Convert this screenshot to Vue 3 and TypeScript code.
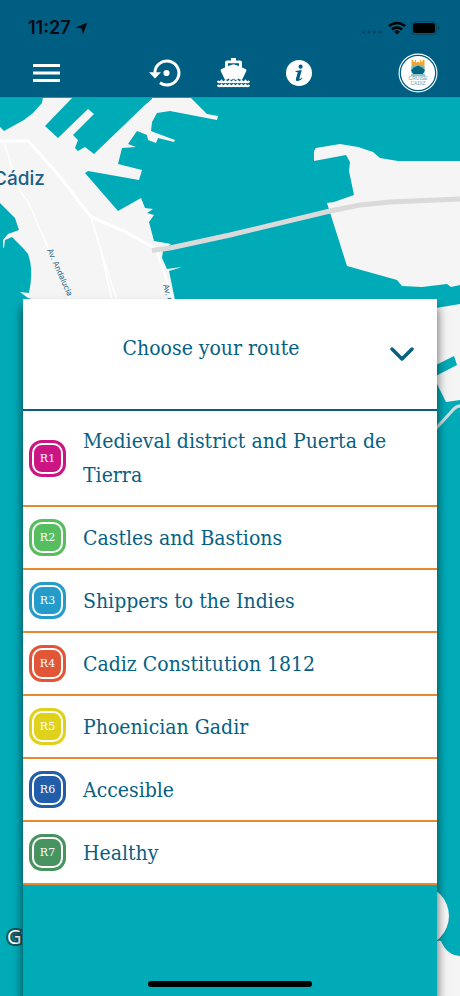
<script setup lang="ts">
import { ref } from 'vue'

interface Route {
  code: string
  name: string
  color: string
}

const open = ref(true)
const selected = ref<string | null>(null)

const routes: Route[] = [
  { code: 'R1', name: 'Medieval district and Puerta de Tierra', color: '#cb1583' },
  { code: 'R2', name: 'Castles and Bastions', color: '#56be5e' },
  { code: 'R3', name: 'Shippers to the Indies', color: '#239bcb' },
  { code: 'R4', name: 'Cadiz Constitution 1812', color: '#e15637' },
  { code: 'R5', name: 'Phoenician Gadir', color: '#dfd11c' },
  { code: 'R6', name: 'Accesible', color: '#215da8' },
  { code: 'R7', name: 'Healthy', color: '#479460' },
]
</script>

<template>
  <div class="screen">
    <header class="top">
      <div class="status">
        <div class="clock">
          <span>11:27</span>
          <svg width="13" height="13" viewBox="0 0 13 13" aria-hidden="true">
            <path d="M12.5.5 7.800 12.400 6.700 6.600.6 5.600z" fill="#020b12" />
          </svg>
        </div>
        <div class="signals">
          <svg width="22" height="6" viewBox="0 0 22 6" aria-hidden="true">
            <g fill="#064462">
              <circle cx="2.5" cy="3" r="1.6" />
              <circle cx="8" cy="3" r="1.6" />
              <circle cx="13.5" cy="3" r="1.6" />
              <circle cx="19" cy="3" r="1.6" />
            </g>
          </svg>
          <svg width="18" height="14" viewBox="0 0 18 14" aria-hidden="true">
            <g fill="none" stroke="#000" stroke-width="2.5">
              <path d="M1 5.2a11.4 11.4 0 0 1 16 0" />
              <path d="M4 8.5a7.1 7.1 0 0 1 10 0" />
            </g>
            <path d="M6.2 10.7a4 4 0 0 1 5.6 0L9 13.6z" />
          </svg>
          <svg width="29" height="14" viewBox="0 0 29 14" aria-hidden="true">
            <rect x=".5" y=".5" width="25" height="13" rx="4" fill="none" stroke="#064462" />
            <rect x="2" y="2" width="22" height="10" rx="2.5" />
            <path d="M27 4.7c2 .8 2 3.8 0 4.6z" fill="#064462" />
          </svg>
        </div>
      </div>
      <nav class="toolbar" aria-label="Main">
        <button type="button" class="tool menu" aria-label="Menu">
          <svg width="27" height="18" viewBox="0 0 27 18">
            <path d="M0 1.5h27M0 9h27M0 16.5h27" stroke="#fff" stroke-width="3" />
          </svg>
        </button>
        <div class="tools">
          <button type="button" class="tool" aria-label="History">
            <svg width="32" height="28" viewBox="0 0 32 28">
              <path d="M5.900 14A12 12 0 1 1 11 23.800" fill="none" stroke="#fff" stroke-width="3" />
              <path d="M0 13.200h12L6 19.600z" fill="#fff" />
              <circle cx="17.500" cy="14" r="3.100" fill="#fff" />
            </svg>
          </button>
          <button type="button" class="tool" aria-label="Cruise ships">
            <svg width="33" height="30" viewBox="0 0 33 30">
              <path
                fill-rule="evenodd"
                d="M14 0h5v2.500h4q2 0 2 2v5l3.500 1.500q1.300.6.8 2l-4.100 8.500q-1.700.8-3.700-1-2.500 2.800-5 0-2.500 2.800-5 0-2 1.800-3.700 1L3.700 13q-.5-1.400.8-2L8 9.500v-5q0-2 2-2h4zM11 5.300v2.800l5.500-1.800 5.500 1.800V5.300z"
                fill="#fff"
              />
              <path
                d="M.5 23q2 2.500 4 0 2 2.500 4 0 2 2.500 4 0 2 2.500 4 0 2 2.500 4 0 2 2.500 4 0 2 2.500 4 0 2 2.500 4 0M.5 27q2 2.500 4 0 2 2.500 4 0 2 2.500 4 0 2 2.500 4 0 2 2.500 4 0 2 2.500 4 0 2 2.500 4 0 2 2.500 4 0"
                fill="none"
                stroke="#fff"
                stroke-width="2.200"
              />
            </svg>
          </button>
          <button type="button" class="tool" aria-label="Information">
            <svg width="26" height="26" viewBox="0 0 26 26">
              <circle cx="13" cy="13" r="13" fill="#fff" />
              <circle cx="14.600" cy="6.700" r="2.100" fill="#005e83" />
              <path
                d="M9.500 11.300q3-.8 6.300-1.200l-2.300 8q-.3 1.200.5.900.7-.3 1.600-1.500l.9.600q-2 3-4.600 3-2.600 0-1.900-2.600l1.600-5.500q.3-1-.6-1l-1.500-.1z"
                fill="#005e83"
              />
            </svg>
          </button>
        </div>
        <a class="brand" href="#" aria-label="Cruise Cadiz">
          <svg width="40" height="40" viewBox="0 0 40 40">
            <circle cx="20" cy="20" r="19.500" fill="#fff" />
            <circle cx="20" cy="20" r="17.700" fill="none" stroke="#005e83" stroke-width="1.300" />
            <path
              d="M13.500 16V7h2v2h1.500V7h1v3q2-2.500 4 0V7h1v2h1.500V7h2v9z"
              fill="#f4a42c"
            />
            <path d="M13.500 13.500q6.500-4 13 0v6.500h-13z" fill="#73bfc9" />
            <path d="M13 17q3.500-3.500 7-4.500 3.500 1 7 4.500l-2 4h-10z" fill="#04677f" />
            <path d="M13 22h14" stroke="#2383a0" />
            <text x="20" y="27" class="brand-text">CRUISE</text>
            <text x="20" y="32" class="brand-text">CADIZ</text>
          </svg>
        </a>
      </nav>
    </header>

    <main class="stage">
      <svg
        class="map"
        viewBox="0 98 460 898"
        preserveAspectRatio="xMinYMin slice"
        role="img"
        aria-label="Map of Cádiz"
      >
        <path
          d="M43 97H73L45 126 58 138 88 109 94 114 73 135 78 140 75 148 78 151 85 147 94 154 145 105 152 99V97H190L201 108 207 114 218 116 217 120 170 111 157 113 152 122 151 131 156 133 175 140 174 142 158 138 156 143 148 140 147 135 137 131 128 144 136 147 122 148 118 164 142 170 139 180 88 171 85 173 118 211 141 198 145 208 153 209 147 213 154 215 149 222 154 241 171 244 163 251 162 258 167 269 182 267 169 271 175 300H35L28 298 20 292 29 293Q34 270 28 254L23 248 12 237 5 240 4 248 3 247V240L8 234 19 230 15 218 0 203V127L4 131 24 120 33 113 42 103Z"
          fill="#f5f5f5"
        />
        <g fill="none" stroke="#fff">
          <path d="M0 141 13 141 28 141 57 173 91 217 124 231 156 249" stroke-width="3" />
          <path d="M4 142 10 162 18 188 29 204 46 243 70 300M91 217 101 251 117 300M101 251 112 300" stroke-width="1.500" />
          <path d="M156 249 164 272 173 300" stroke-width="2" />
        </g>
        <path
          d="M314 151 316 148 340 144 358 147 373 152 380 158 398 161H460V285L451 287 447 284 422 287 402 286 397 280 347 266 327 203 334 202 354 195 349 171 350 162 346 155 314 161Z"
          fill="#f5f5f5"
        />
        <path
          d="M152 250.500 170 248 230 235 330 211 360 205 390 202 460 199"
          fill="none"
          stroke="#d9dad9"
          stroke-width="5"
        />
        <path d="M430 309 460 304V400L446 402 437 384 430 370Z" fill="#f5f5f5" />
        <path d="M430 368 454 356 457 365 430 379Z" fill="#00abb8" />
        <path d="M430 435 452 411Q457 405 462 406" fill="none" stroke="#cfdde0" stroke-width="3" />
        <path d="M430 939 441 941Q447 956 462 956V996H430Z" fill="#f5f5f5" />
        <circle cx="418" cy="917" r="31" fill="#087f89" />
        <circle cx="418" cy="916" r="31" fill="#f8f8f8" />
        <text x="-7" y="185" class="city">Cádiz</text>
        <text class="street" transform="translate(47 250) rotate(66)">Av. Andalucía</text>
        <text class="street" transform="translate(163 285) rotate(75)">Av. de</text>
        <text x="7" y="944" class="attribution">G</text>
      </svg>

      <section class="panel">
        <div class="panel-head">
          <h1 class="title">Choose your route</h1>
          <button
            type="button"
            class="toggle"
            aria-label="Toggle routes"
            :aria-expanded="open"
            @click="open = !open"
          >
            <svg width="24" height="15" viewBox="0 0 24 15">
              <path
                d="M2 2 12 12 22 2"
                fill="none"
                stroke="#075f83"
                stroke-width="3.500"
                stroke-linecap="round"
                stroke-linejoin="round"
              />
            </svg>
          </button>
        </div>
        <ul v-if="open" class="routes">
          <li v-for="route in routes" :key="route.code" class="item">
            <button type="button" class="route" @click="selected = route.code">
              <span class="badge" :style="{ backgroundColor: route.color }">
                <span class="code">{{ route.code }}</span>
              </span>
              <span class="name">{{ route.name }}</span>
            </button>
          </li>
        </ul>
      </section>
      <div class="home"></div>
    </main>
  </div>
</template>

<style>
body {
  margin: 0;
  background: #00abb8;
}
</style>

<style scoped>
.screen {
  display: flex;
  flex-direction: column;
  min-height: 100vh;
  font-family: 'DejaVu Serif Condensed', 'DejaVu Serif', serif;
  color: #075f83;
}

button {
  margin: 0;
  padding: 0;
  border: 0;
  background: none;
  color: inherit;
  font: inherit;
  cursor: pointer;
}

svg {
  display: block;
}

.top {
  background: #005e83;
  border-bottom: 1px solid #2b8fae;
}

.status {
  display: flex;
  justify-content: space-between;
  align-items: center;
  height: 40px;
  padding: 16px 20px 0 28px;
  box-sizing: border-box;
}

.clock {
  display: flex;
  align-items: center;
  gap: 4px;
  color: #020b12;
  font: 600 18px/24px Inter, sans-serif;
}

.signals {
  display: flex;
  align-items: center;
  gap: 5px;
}

.signals svg:first-child {
  margin-top: 8px;
}

.toolbar {
  display: grid;
  grid-template-columns: 1fr auto 1fr;
  align-items: center;
  height: 57px;
  padding: 8px 22px 0 33px;
  box-sizing: border-box;
}

.tools {
  display: flex;
  align-items: center;
  gap: 36px;
  margin-right: 10px;
}

.brand {
  justify-self: end;
}

.menu {
  justify-self: start;
}

.brand-text {
  fill: #5d9fb3;
  font: 5px 'Liberation Sans', sans-serif;
  text-anchor: middle;
}

.stage {
  position: relative;
  display: flex;
  flex: 1;
  flex-direction: column;
  padding: 201px 23px 0;
  overflow: hidden;
  background: #00abb8;
}

.map {
  position: absolute;
  inset: 0;
  width: 100%;
  height: 100%;
}

.city {
  fill: #1b5f85;
  font: 500 19px Inter, sans-serif;
}

.street {
  fill: #1f6484;
  font: 8px Inter, sans-serif;
}

.attribution {
  fill: #fff;
  stroke: #17555c;
  stroke-width: 4px;
  paint-order: stroke;
  font: 500 20px 'Open Sans', sans-serif;
}

.panel {
  position: relative;
  flex: 1;
  background: #00abb8;
  box-shadow: 0 8px 10px rgba(0, 0, 0, 0.65);
}

.panel-head {
  display: flex;
  align-items: center;
  height: 110px;
  padding-right: 23px;
  border-bottom: 2px solid #075f83;
  background: #fff;
}

.title {
  flex: 1;
  margin: 0;
  padding: 0 0 12px 9px;
  font-size: 21px;
  font-weight: 400;
  line-height: 34px;
  text-align: center;
}

.routes {
  margin: 0;
  padding: 0;
  list-style: none;
}

.item {
  border-bottom: 2px solid #e58a2d;
  background: #fff;
}

.route {
  display: flex;
  align-items: center;
  gap: 17px;
  width: 100%;
  padding: 12px 20px 12px 6px;
  text-align: left;
}

.badge {
  display: flex;
  flex: none;
  width: 37px;
  height: 37px;
  padding: 3px;
  box-sizing: border-box;
  border-radius: 13px;
}

.code {
  flex: 1;
  border: 2px solid #fff;
  border-radius: 10px;
  color: #fff;
  font: 11px/27px 'DejaVu Serif', serif;
  text-align: center;
}

.name {
  padding: 1px 0;
  font-size: 21px;
  line-height: 34px;
}

.home {
  position: absolute;
  bottom: 9px;
  left: 50%;
  width: 164px;
  height: 6px;
  border-radius: 3px;
  background: #000;
  transform: translateX(-50%);
}
</style>
